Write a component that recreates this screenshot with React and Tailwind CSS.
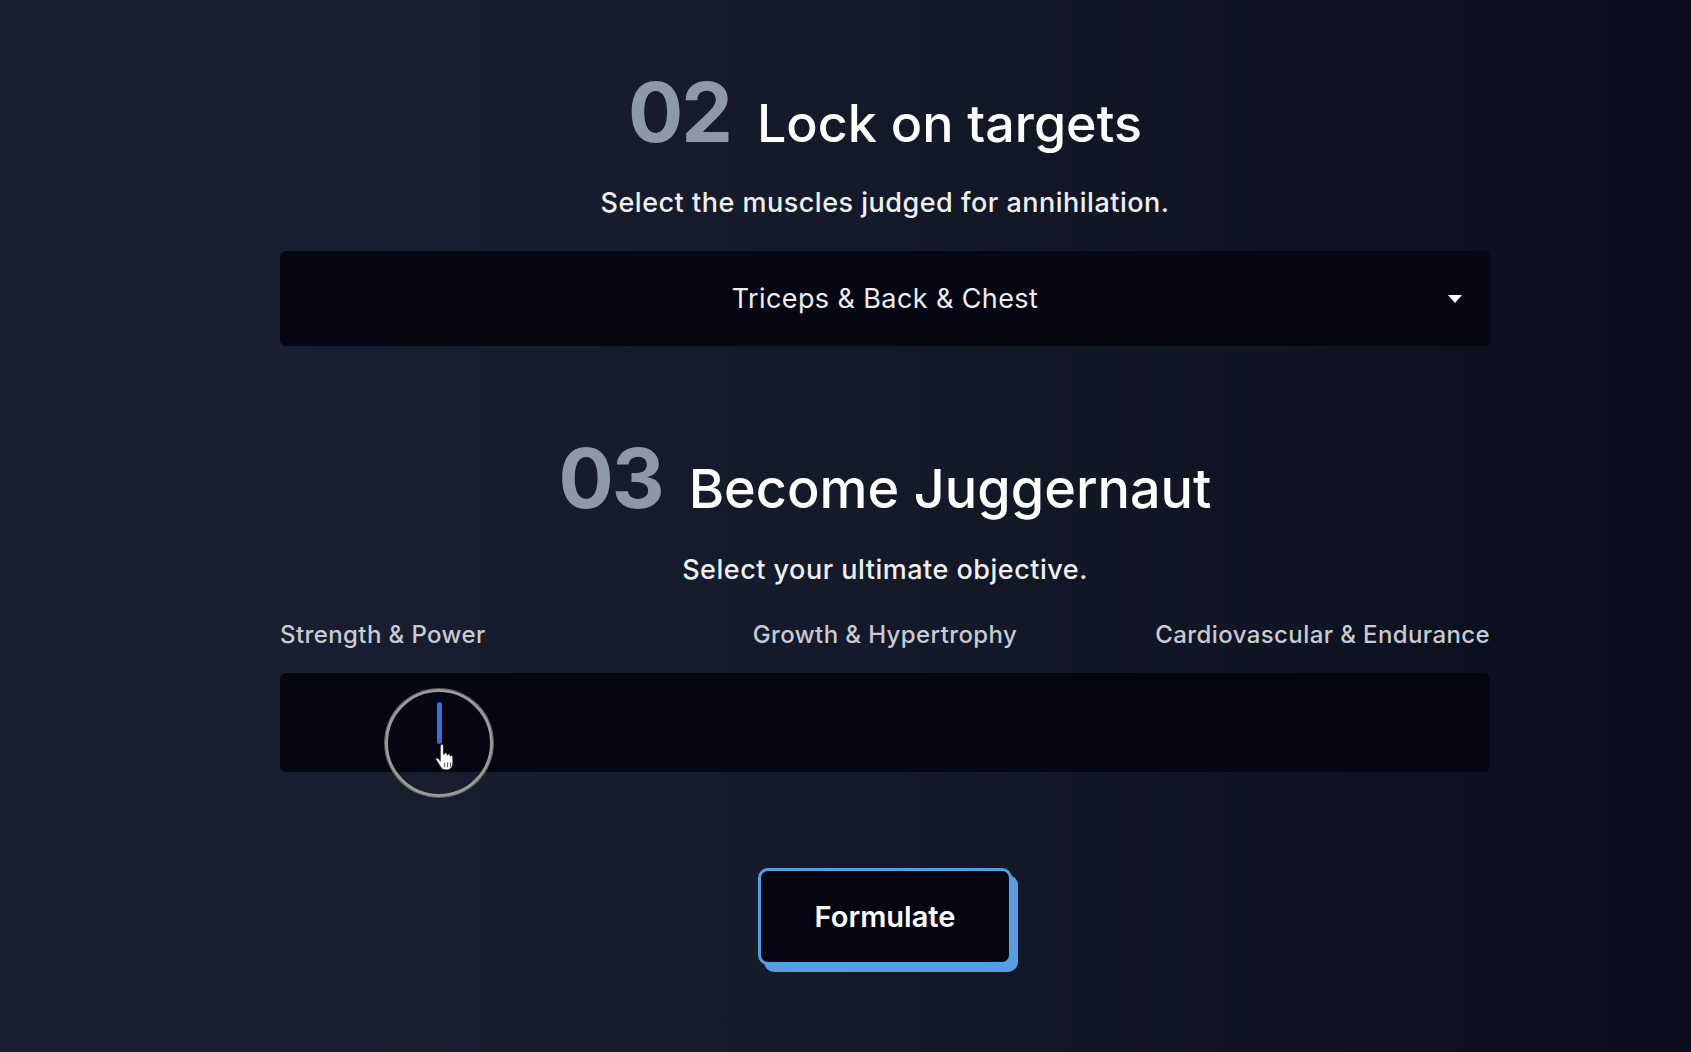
import React from "react";

const font = { fontFamily: "Inter, 'Noto Sans', sans-serif" };

function Heading({ num, title, size }) {
  return (
    <div className="flex items-baseline gap-[26px] leading-none">
      <span className="text-[82px] font-bold tracking-tight text-[#8d99ab]">{num}</span>
      <span className={size + " font-medium text-white"}>{title}</span>
    </div>
  );
}

function Hand() {
  return (
    <svg width="26" height="30" viewBox="0 0 22 26" className="absolute left-[434px] top-[743px]">
      <path
        d="M5 2.5c0-1 .8-1.7 1.6-1.7s1.6.7 1.6 1.7V10l.3-1.2c.5-.8 2-.8 2.5.1l.2 1c.5-.8 2-.8 2.5.2l.2.9c.6-.7 2-.5 2.3.5V18c0 3-2 5.5-5 5.5H9.5c-1.6 0-3-.8-3.8-2.1L1.3 14.6c-.5-.9.1-1.9 1.1-1.9.6 0 1.1.3 1.5.8L5 15V2.5z"
        fill="#ffffff"
        stroke="#111"
        strokeWidth="1"
      />
      <path d="M9 17v4M11.5 17v4M14 17v4" stroke="#555" strokeWidth="0.9" />
    </svg>
  );
}

export default function App() {
  return (
    <div
      style={font}
      className="relative min-h-[1052px] w-full bg-gradient-to-r from-[#1b2133] via-[#151a2a] to-[#0a0d1b] pl-[280px] pr-[201px] pt-[72px]"
    >
      <div className="flex flex-col items-center">
        <Heading num="02" title="Lock on targets" size="text-[52px]" />
        <p className="mt-[35px] text-[27px] font-medium leading-none tracking-[0.5px] text-[#eef0f4]">
          Select the muscles judged for annihilation.
        </p>
        <div className="relative mt-[35px] flex h-[95px] w-full items-center justify-center rounded-md bg-[#060713]">
          <span className="text-[27px] leading-none tracking-[0.4px] text-[#eceef2]">Triceps &amp; Back &amp; Chest</span>
          <svg width="16" height="10" viewBox="0 0 16 10" className="absolute right-[27px] top-[43px]">
            <path d="M1 1h14L8 9z" fill="#ffffff" />
          </svg>
        </div>

        <div className="mt-[92px]">
          <Heading num="03" title="Become Juggernaut" size="text-[54px]" />
        </div>
        <p className="mt-[36px] text-[27px] font-medium leading-none tracking-[0.5px] text-[#eef0f4]">
          Select your ultimate objective.
        </p>

        <div className="mt-[40px] grid w-full grid-cols-3 text-[24px] font-medium leading-none tracking-[0.4px] text-[#c7cbd3]">
          <span className="text-left">Strength &amp; Power</span>
          <span className="text-center">Growth &amp; Hypertrophy</span>
          <span className="text-right">Cardiovascular &amp; Endurance</span>
        </div>

        <div className="mt-[26px] h-[99px] w-full rounded-md bg-[#050612] pl-[157px] pt-[29px]">
          <div className="h-[42px] w-[5px] rounded-sm bg-[#3b6fd6]" />
        </div>

        <button className="mt-[96px] flex h-[97px] w-[254px] items-center justify-center rounded-[10px] border-[3px] border-[#4aa3e0] bg-[#050612] text-[29px] font-semibold text-white shadow-[6px_7px_0_#5b9be6]">
          Formulate
        </button>
      </div>

      <div className="pointer-events-none absolute left-[385px] top-[689px] h-[108px] w-[108px] rounded-full border-[3px] border-[#9a9a9a] ring-1 ring-[#5a5a5a]" />
      <Hand />
    </div>
  );
}
